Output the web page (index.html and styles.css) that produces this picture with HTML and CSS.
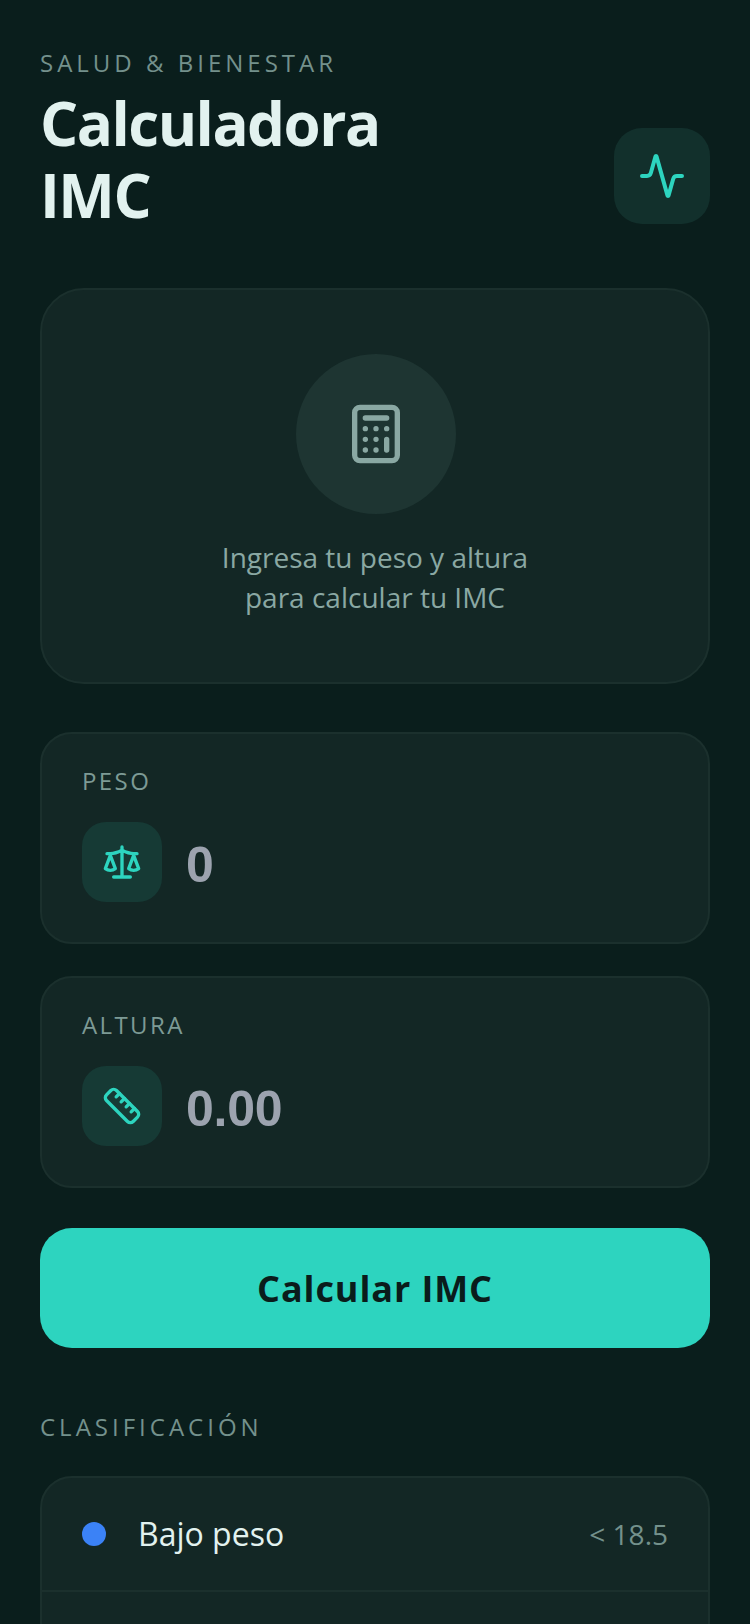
FILE: index.html
```html
<!DOCTYPE html>
<html lang="es">
<head>
<meta charset="utf-8">
<title>Calculadora IMC</title>
<link rel="stylesheet" href="styles.css">
</head>
<body>
<main class="page">
  <header class="header">
    <div class="header-text">
      <p class="eyebrow">SALUD &amp; BIENESTAR</p>
      <h1 class="title">Calculadora<br>IMC</h1>
    </div>
    <div class="header-icon">
      <svg class="icon-pulse" viewBox="0 0 24 24" fill="none" stroke="currentColor" stroke-width="2" stroke-linecap="round" stroke-linejoin="round"><path d="M22 12h-2.48a2 2 0 0 0-1.93 1.46l-2.35 8.36a.25.25 0 0 1-.48 0L9.24 2.18a.25.25 0 0 0-.48 0l-2.35 8.36A2 2 0 0 1 4.49 12H2"/></svg>
    </div>
  </header>

  <section class="card-empty">
    <div class="empty-circle">
      <svg class="icon-calc" viewBox="0 0 24 24" fill="none" stroke="currentColor" stroke-width="2" stroke-linecap="round" stroke-linejoin="round"><rect x="4" y="2" width="16" height="20" rx="2"/><path d="M8 6h8M16 14v4M16 10h.01M12 10h.01M8 10h.01M12 14h.01M8 14h.01M12 18h.01M8 18h.01"/></svg>
    </div>
    <p class="empty-text">Ingresa tu peso y altura<br>para calcular tu IMC</p>
  </section>

  <section class="field">
    <label class="field-label" for="peso">PESO</label>
    <div class="field-row">
      <div class="field-icon">
        <svg class="icon-field" viewBox="0 0 24 24" fill="none" stroke="currentColor" stroke-width="2" stroke-linecap="round" stroke-linejoin="round"><path d="m16 16 3-8 3 8c-.87.65-1.92 1-3 1s-2.13-.35-3-1Z"/><path d="m2 16 3-8 3 8c-.87.65-1.92 1-3 1s-2.13-.35-3-1Z"/><path d="M7 21h10M12 3v18M3 7h2c2 0 5-1 7-2 2 1 5 2 7 2h2"/></svg>
      </div>
      <input class="field-input" id="peso" type="text" placeholder="0">
    </div>
  </section>

  <section class="field">
    <label class="field-label" for="altura">ALTURA</label>
    <div class="field-row">
      <div class="field-icon">
        <svg class="icon-field" viewBox="0 0 24 24" fill="none" stroke="currentColor" stroke-width="2" stroke-linecap="round" stroke-linejoin="round"><path d="M21.3 15.3a2.4 2.4 0 0 1 0 3.4l-2.6 2.6a2.4 2.4 0 0 1-3.4 0L2.7 8.7a2.41 2.41 0 0 1 0-3.4l2.6-2.6a2.41 2.41 0 0 1 3.4 0Z"/><path d="m14.5 12.5 2-2M11.5 9.5l2-2M8.5 6.5l2-2M17.5 15.5l2-2"/></svg>
      </div>
      <input class="field-input" id="altura" type="text" placeholder="0.00">
    </div>
  </section>

  <button class="submit" type="button">Calcular IMC</button>

  <h2 class="section-label">CLASIFICACIÓN</h2>
  <ul class="class-list">
    <li class="class-row">
      <span class="dot dot-blue"></span>
      <span class="class-name">Bajo peso</span>
      <span class="class-range">&lt; 18.5</span>
    </li>
  </ul>
</main>
</body>
</html>
```
FILE: styles.css
```css
* { box-sizing: border-box; }
html, body { margin: 0; height: 1624px; overflow: hidden; background: #0a1e1c; }
body { font-family: "Open Sans", sans-serif; color: #e2f2ef; }
.page { padding: 48px 40px 0; display: flex; flex-direction: column; }

.header { display: flex; justify-content: space-between; align-items: flex-end; height: 192px; margin-bottom: 48px; padding-bottom: 16px; }
.header-text { align-self: flex-start; }
.eyebrow { margin: 0 0 9px; font-size: 24px; line-height: 30px; letter-spacing: 4px; color: #74918c; }
.title { margin: 0; font-size: 60px; line-height: 72px; font-weight: 700; letter-spacing: -1.5px; color: #e2f2ef; }
.header-icon { width: 96px; height: 96px; border-radius: 28px; background: #12302c; color: #2dd4bf; display: flex; align-items: center; justify-content: center; }
.icon-pulse { width: 48px; height: 48px; }

.card-empty { height: 396px; border-radius: 44px; background: #132725; border: 2px solid #1b302d; display: flex; flex-direction: column; align-items: center; padding-top: 64px; margin-bottom: 48px; }
.empty-circle { width: 160px; height: 160px; margin-left: 2px; border-radius: 50%; background: #1e3532; color: #8aa8a3; display: flex; align-items: center; justify-content: center; margin-bottom: 23px; }
.icon-calc { width: 64px; height: 64px; }
.empty-text { margin: 0; font-size: 28px; line-height: 40px; text-align: center; color: #8aa8a3; }

.field { height: 212px; border-radius: 32px; background: #132725; border: 2px solid #1b302d; padding: 32px 40px; margin-bottom: 32px; display: flex; flex-direction: column; }
.field + .field { margin-bottom: 40px; }
.field-label { font-size: 24px; line-height: 30px; letter-spacing: 2.4px; color: #7d9a95; margin-bottom: 26px; }
.field-row { display: flex; align-items: center; gap: 24px; }
.field-icon { flex: none; width: 80px; height: 80px; border-radius: 24px; background: #163a35; color: #2dd4bf; display: flex; align-items: center; justify-content: center; }
.icon-field { width: 40px; height: 40px; }
.field-input { flex: 1; min-width: 0; border: 0; outline: 0; padding: 6px 0 0; background: transparent; font-family: "Liberation Sans", Arial, sans-serif; font-size: 50px; font-weight: 700; letter-spacing: -0.25px; color: #e2f2ef; }
.field-input::placeholder { color: #9ca3af; opacity: 1; }

.submit { height: 120px; border: 0; border-radius: 32px; background: #2dd4bf; color: #0a1c1b; font-family: "Open Sans", sans-serif; font-size: 36px; font-weight: 700; letter-spacing: 0.9px; margin-bottom: 64px; }

.section-label { margin: 0 0 34px; font-size: 24px; line-height: 30px; font-weight: 400; letter-spacing: 4px; color: #74918c; }
.class-list { list-style: none; margin: 0; padding: 0 0 60px; border-radius: 32px; background: #132725; border: 2px solid #1b302d; overflow: hidden; }
.class-row { height: 114px; display: flex; align-items: center; padding: 0 40px; gap: 32px; border-bottom: 2px solid #1b302d; }
.dot { flex: none; width: 24px; height: 24px; border-radius: 50%; }
.dot-blue { background: #3b82f6; }
.class-name { flex: 1; font-size: 32px; line-height: 44px; color: #e2f2ef; }
.class-range { font-size: 28px; line-height: 40px; color: #74918c; }
```
